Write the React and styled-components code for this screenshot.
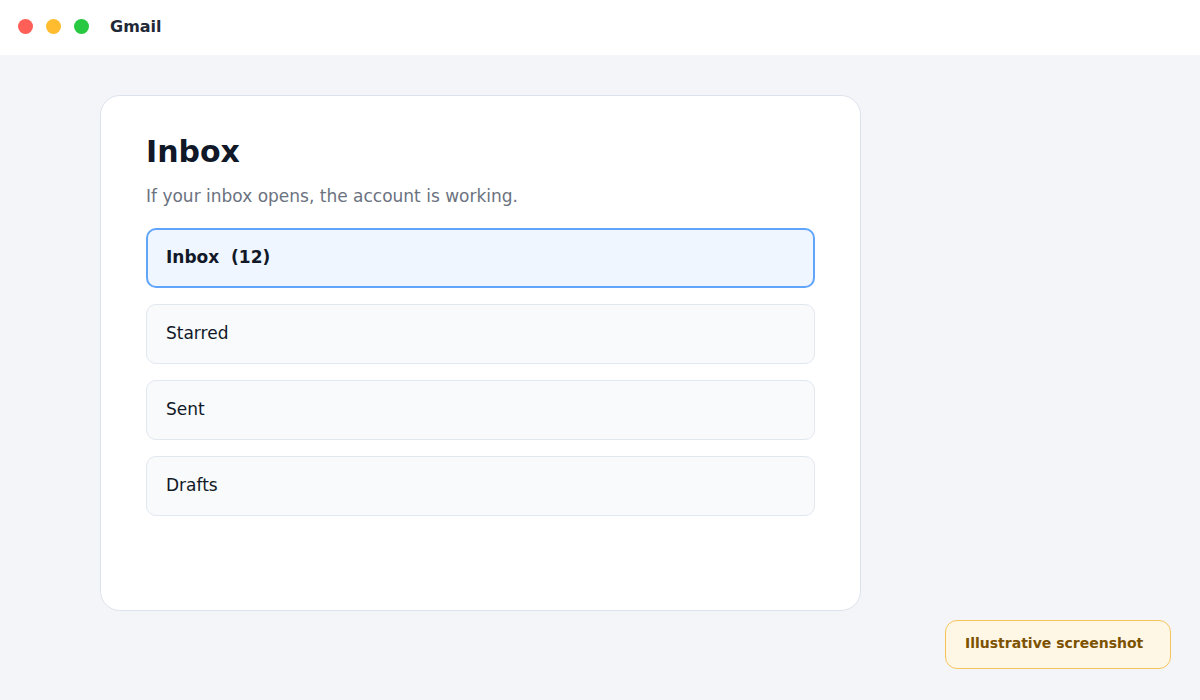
import React from "react";
import styled, { createGlobalStyle } from "styled-components";

const Global = createGlobalStyle`
  html, body { margin: 0; padding: 0; }
  body {
    background: #f4f5f9;
    font-family: "DejaVu Sans", "Liberation Sans", sans-serif;
    width: 1200px;
    height: 700px;
    overflow: hidden;
  }
`;

const Page = styled.div`
  display: flex;
  flex-direction: column;
  height: 700px;
`;

const TitleBar = styled.header`
  height: 55px;
  box-sizing: border-box;
  background: #ffffff;
  display: flex;
  align-items: center;
  padding: 0 0 3px 18px;
  gap: 13px;
  flex-shrink: 0;
`;

const Dot = styled.span`
  width: 15px;
  height: 15px;
  border-radius: 50%;
  background: ${(p) => p.$color};
`;

const AppName = styled.span`
  margin-left: 8px;
  font-size: 16px;
  font-weight: 700;
  color: #1f2937;
`;

const Main = styled.main`
  flex: 1;
  padding: 40px 0 0 100px;
`;

const Card = styled.section`
  width: 761px;
  height: 516px;
  box-sizing: border-box;
  background: #ffffff;
  border: 1px solid #dde3ec;
  border-radius: 20px;
  padding: 36px 45px 0 45px;
`;

const Title = styled.h1`
  margin: 0;
  font-size: 30px;
  font-weight: 700;
  color: #111827;
  line-height: 40px;
`;

const Subtitle = styled.p`
  margin: 12px 0 20px;
  font-size: 17px;
  color: #6b7280;
  line-height: 24px;
`;

const List = styled.div`
  display: flex;
  flex-direction: column;
  gap: 16px;
  width: 669px;
`;

const Item = styled.div`
  height: 60px;
  box-sizing: border-box;
  display: flex;
  align-items: center;
  padding: 0 0 3px ${(p) => (p.$active ? 18 : 19)}px;
  border-radius: 10px;
  border: ${(p) => (p.$active ? "2px solid #60a5fa" : "1px solid #e2e8f0")};
  background: ${(p) => (p.$active ? "#eff6ff" : "#f8fafc")};
  font-size: 17px;
  font-weight: ${(p) => (p.$active ? 700 : 400)};
  color: #111827;
  white-space: pre;
`;

const Badge = styled.div`
  position: fixed;
  right: 29px;
  bottom: 31px;
  width: 226px;
  height: 49px;
  box-sizing: border-box;
  display: flex;
  align-items: center;
  padding: 0 0 3px 19px;
  background: #fff7e6;
  border: 1px solid #f6c35a;
  border-radius: 12px;
  color: #7c5200;
  font-size: 14px;
  font-weight: 700;
`;

export default function App() {
  return (
    <>
      <Global />
      <Page>
        <TitleBar>
          <Dot $color="#ff5f57" />
          <Dot $color="#febc2e" />
          <Dot $color="#28c840" />
          <AppName>Gmail</AppName>
        </TitleBar>
        <Main>
          <Card>
            <Title>Inbox</Title>
            <Subtitle>If your inbox opens, the account is working.</Subtitle>
            <List>
              <Item $active>{"Inbox  (12)"}</Item>
              <Item>Starred</Item>
              <Item>Sent</Item>
              <Item>Drafts</Item>
            </List>
          </Card>
        </Main>
      </Page>
      <Badge>Illustrative screenshot</Badge>
    </>
  );
}
